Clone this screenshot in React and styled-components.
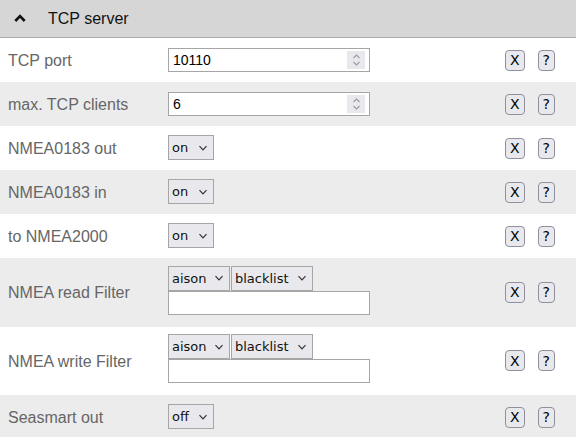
import React from "react";
import styled, { createGlobalStyle } from "styled-components";

const Global = createGlobalStyle`
  body { margin: 0; background: #fff; font-family: "Liberation Sans", Arial, sans-serif; }
`;

const rows = [
  { label: "TCP port", kind: "number", value: "10110" },
  { label: "max. TCP clients", kind: "number", value: "6" },
  { label: "NMEA0183 out", kind: "select", value: "on" },
  { label: "NMEA0183 in", kind: "select", value: "on" },
  { label: "to NMEA2000", kind: "select", value: "on" },
  { label: "NMEA read Filter", kind: "filter" },
  { label: "NMEA write Filter", kind: "filter" },
  { label: "Seasmart out", kind: "select", value: "off" },
];

const arrow =
  "url(\"data:image/svg+xml;utf8,<svg xmlns='http://www.w3.org/2000/svg' width='10' height='6' viewBox='0 0 10 6'><path d='M1.5 1.2 L5 4.8 L8.5 1.2' fill='none' stroke='%23333' stroke-width='1.2'/></svg>\")";

function Spinner() {
  return (
    <SpinBox>
      <svg width="9" height="14" viewBox="0 0 9 14">
        <path d="M1.5 5 L4.5 2 L7.5 5 M1.5 9 L4.5 12 L7.5 9" fill="none" stroke="#9a9aa0" strokeWidth="1.1" />
      </svg>
    </SpinBox>
  );
}

function App() {
  return (
    <>
      <Global />
      <Header>
        <Chevron viewBox="0 0 12 8">
          <path d="M1.3 7 L6 2.2 L10.7 7" />
        </Chevron>
        <span>TCP server</span>
      </Header>
      {rows.map((r, i) => (
        <Row key={r.label} $alt={i % 2 === 1} $tall={r.kind === "filter"}>
          <Label>{r.label}</Label>
          <Value>
            {r.kind === "number" && (
              <NumField>
                <NumInput type="text" defaultValue={r.value} />
                <Spinner />
              </NumField>
            )}
            {r.kind === "select" && (
              <Select defaultValue={r.value} $w={46}>
                <option value="on">on</option>
                <option value="off">off</option>
              </Select>
            )}
            {r.kind === "filter" && (
              <FilterBox>
                <SelectPair>
                  <Select defaultValue="aison" $w={62}>
                    <option value="aison">aison</option>
                    <option value="aisoff">aisoff</option>
                  </Select>
                  <Select defaultValue="blacklist" $w={82}>
                    <option value="blacklist">blacklist</option>
                    <option value="whitelist">whitelist</option>
                  </Select>
                </SelectPair>
                <TextInput type="text" />
              </FilterBox>
            )}
          </Value>
          <Buttons>
            <SmallButton>X</SmallButton>
            <SmallButton>?</SmallButton>
          </Buttons>
        </Row>
      ))}
    </>
  );
}
export default App;

const Header = styled.div`
  height: 37px;
  background: #d6d6d6;
  border-bottom: 1px solid #a9a9a9;
  display: flex;
  align-items: center;
  padding-left: 14px;
  font-size: 16px;
  color: #111;
  gap: 22px;
`;

const Chevron = styled.svg`
  width: 12px;
  height: 8px;
  fill: none;
  stroke: #111;
  stroke-width: 2.6;
  margin-top: -2px;
`;

const Row = styled.div`
  display: grid;
  grid-template-columns: 160px 1fr auto;
  align-items: center;
  height: ${(p) => (p.$tall ? "68.5px" : "44px")};
  background: ${(p) => (p.$alt ? "#ececec" : "#fff")};
  padding-left: 8px;
  padding-right: 21px;
`;

const Label = styled.div`
  font-size: 16px;
  color: #666;
  padding-top: 2px;
`;

const Value = styled.div`
  display: flex;
  align-items: center;
`;

const FilterBox = styled.div`
  display: flex;
  flex-direction: column;
  margin-top: -3px;
`;

const SelectPair = styled.div`
  display: flex;
  gap: 1px;
`;

const NumField = styled.div`
  width: 202px;
  height: 24px;
  box-sizing: border-box;
  border: 1px solid #a6a6a6;
  background: #fff;
  display: flex;
  align-items: center;
  padding-right: 4px;
  margin-top: -1px;
`;

const NumInput = styled.input`
  flex: 1;
  min-width: 0;
  border: none;
  padding: 0 4px;
  font-family: "Liberation Sans", Arial, sans-serif;
  font-size: 14px;
  color: #000;
  outline: none;
  background: transparent;
`;

const SpinBox = styled.span`
  width: 18px;
  height: 18px;
  background: #e9e9ed;
  display: flex;
  align-items: center;
  justify-content: center;
`;

const TextInput = styled.input`
  width: 202px;
  height: 24px;
  box-sizing: border-box;
  border: 1px solid #a6a6a6;
  border-radius: 0;
  padding: 0 4px;
  font-family: "Liberation Sans", Arial, sans-serif;
  font-size: 14px;
  outline: none;
`;

const Select = styled.select`
  appearance: none;
  width: ${(p) => p.$w}px;
  height: 25px;
  box-sizing: border-box;
  border: 1px solid #a6a6a6;
  border-radius: 0;
  background: #e9e9ed ${arrow} no-repeat right 5px center;
  font-family: "DejaVu Sans", sans-serif;
  font-size: 13px;
  color: #111;
  padding: 0 20px 0 3px;
  margin-top: -1px;
`;

const Buttons = styled.div`
  display: flex;
  gap: 13px;
`;

const SmallButton = styled.button`
  height: 21px;
  padding: 0 4px;
  border: 1px solid #8f8f9d;
  border-radius: 4px;
  background: #e9e9ed;
  font-family: "DejaVu Sans", sans-serif;
  font-size: 14px;
  color: #000;
`;
